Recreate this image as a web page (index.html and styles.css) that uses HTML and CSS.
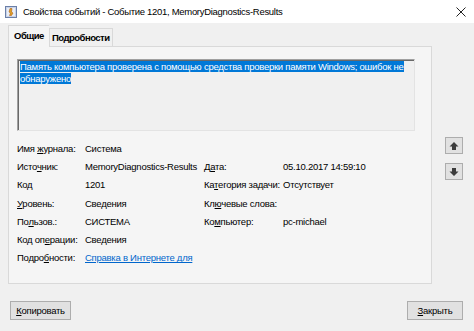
FILE: index.html
```html
<!DOCTYPE html>
<html lang="ru">
<head>
    <meta charset="UTF-8">
    <meta name="viewport" content="width=device-width, initial-scale=1.0">
    <title>Свойства событий</title>
    <link rel="stylesheet" href="styles.css">
</head>
<body>

    <div class="window">
        <!-- Заголовок окна -->
        <div class="titlebar">
            <svg class="app-icon" width="12" height="12" viewBox="0 0 12 12">
                <rect x="0.5" y="0.5" width="11" height="11" fill="#c9d3e6" stroke="#6b7fa8"/>
                <rect x="2" y="2" width="8" height="8" fill="#e9eef7"/>
                <path d="M5 2.5 L7 2.5 L6.5 6 L8 7 L6.5 9.5 L4.5 9.5 L5.5 7 L4 6 Z" fill="#e0a020" stroke="#b0601a" stroke-width="0.6"/>
            </svg>
            <span class="title">Свойства событий - Событие 1201, MemoryDiagnostics-Results</span>
            <svg class="close" width="10" height="10" viewBox="0 0 10 10">
                <path d="M0.5 0.5 L9.5 9.5 M9.5 0.5 L0.5 9.5" stroke="#222" stroke-width="1"/>
            </svg>
        </div>

        <div class="content">
            <div class="main">
                <div class="tabs-area">
                    <div class="tabs">
                        <div class="tab active">Общие</div>
                        <div class="tab">Подробности</div>
                    </div>
                    <div class="panel">
                        <div class="description">
                            <span class="selected">Память компьютера проверена с помощью средства проверки памяти Windows; ошибок не<br>обнаружено</span>
                        </div>

                        <div class="fields">
                            <div class="label">Имя <u>ж</u>урнала:</div>
                            <div class="value">Система</div>
                            <div></div>
                            <div></div>

                            <div class="label">Исто<u>ч</u>ник:</div>
                            <div class="value">MemoryDiagnostics-Results</div>
                            <div class="label">Д<u>а</u>та:</div>
                            <div class="value">05.10.2017 14:59:10</div>

                            <div class="label">Код</div>
                            <div class="value">1201</div>
                            <div class="label">Ка<u>т</u>егория задачи:</div>
                            <div class="value">Отсутствует</div>

                            <div class="label"><u>У</u>ровень:</div>
                            <div class="value">Сведения</div>
                            <div class="label">Кл<u>ю</u>чевые слова:</div>
                            <div class="value"></div>

                            <div class="label">По<u>л</u>ьзов.:</div>
                            <div class="value">СИСТЕМА</div>
                            <div class="label">Ко<u>м</u>пьютер:</div>
                            <div class="value">pc-michael</div>

                            <div class="label">Код оп<u>е</u>рации:</div>
                            <div class="value">Сведения</div>
                            <div></div>
                            <div></div>

                            <div class="label">Подро<u>б</u>ности:</div>
                            <div class="value wide"><a href="#" class="link">Справка в Интернете для</a></div>
                        </div>
                    </div>
                </div>

                <!-- Кнопки навигации -->
                <div class="arrows">
                    <div class="arrow-btn">
                        <svg width="10" height="10" viewBox="0 0 10 10">
                            <path d="M5 1 L9.5 5.5 L7 5.5 L7 9 L3 9 L3 5.5 L0.5 5.5 Z" fill="#3c3c3c"/>
                        </svg>
                    </div>
                    <div class="arrow-btn">
                        <svg width="10" height="10" viewBox="0 0 10 10">
                            <path d="M5 9 L9.5 4.5 L7 4.5 L7 1 L3 1 L3 4.5 L0.5 4.5 Z" fill="#3c3c3c"/>
                        </svg>
                    </div>
                </div>
            </div>

            <div class="buttons">
                <button class="btn copy"><u>К</u>опировать</button>
                <button class="btn close-btn"><u>З</u>акрыть</button>
            </div>
        </div>
    </div>

</body>
</html>
```

FILE: styles.css
```css
body {
    margin: 0;
    padding: 0;
    font-family: "Liberation Sans", Arial, sans-serif;
    font-size: 9.5px;
    letter-spacing: -0.25px;
    color: #000;
    background-color: #f0f0f0;
}
.window {
    width: 474px;
    height: 331px;
    display: flex;
    flex-direction: column;
    background-color: #f0f0f0;
}
.titlebar {
    height: 23px;
    background-color: #fff;
    display: flex;
    align-items: center;
    padding-left: 5px;
    padding-right: 8px;
    box-sizing: border-box;
}
.app-icon {
    margin-right: 6px;
    flex: none;
}
.title {
    flex: 1;
    white-space: nowrap;
    letter-spacing: -0.3px;
}
.close {
    flex: none;
}
.content {
    flex: 1;
    display: flex;
    flex-direction: column;
    padding: 2px 11px 0 8px;
}
.main {
    display: flex;
    gap: 13px;
}
.tabs-area {
    width: 424px;
}
.tabs {
    display: flex;
    align-items: flex-end;
    height: 21px;
    position: relative;
    z-index: 1;
}
.tab {
    height: 18px;
    line-height: 17px;
    padding: 0 2px;
    border: 1px solid #d9d9d9;
    border-bottom: none;
    background-color: #f0f0f0;
    box-sizing: border-box;
    font-weight: bold;
    letter-spacing: -0.5px;
}
.tab.active {
    height: 22px;
    line-height: 20px;
    padding: 0 5px;
    margin-bottom: -1px;
    background-color: #f5f5f5;
    border-right: none;
}
.panel {
    height: 238px;
    border: 1px solid #d9d9d9;
    background-color: #f5f5f5;
    box-sizing: border-box;
    padding: 12px 16px 0 8px;
}
.description {
    height: 72px;
    border: 1px solid;
    border-color: #a0a0a0 #e3e3e3 #e3e3e3 #a0a0a0;
    box-shadow: inset 1px 1px #696969;
    background-color: #f0f0f0;
    box-sizing: border-box;
    padding: 1px 0 0 2px;
    line-height: 12px;
    white-space: nowrap;
}
.selected {
    background-color: #0078d7;
    color: #fff;
}
.fields {
    margin-top: 8px;
    display: grid;
    grid-template-columns: 68px 119px 79px 1fr;
    grid-auto-rows: 18.3px;
    align-items: center;
    white-space: nowrap;
}
.wide {
    grid-column: span 3;
}
.link {
    color: #0066cc;
}
.arrows {
    display: flex;
    flex-direction: column;
    gap: 9px;
    padding-top: 112px;
}
.arrow-btn {
    width: 18px;
    height: 17px;
    border: 1px solid #adadad;
    background-color: #e1e1e1;
    box-sizing: border-box;
    display: flex;
    align-items: center;
    justify-content: center;
}
.buttons {
    display: flex;
    justify-content: space-between;
    padding: 17px 0 0 2px;
}
.btn {
    height: 19px;
    border: 1px solid #adadad;
    background-color: #e1e1e1;
    font-family: inherit;
    font-size: 9.5px;
    letter-spacing: -0.25px;
    padding: 0;
    color: #000;
}
.copy {
    width: 61px;
}
.close-btn {
    width: 56px;
}
```
